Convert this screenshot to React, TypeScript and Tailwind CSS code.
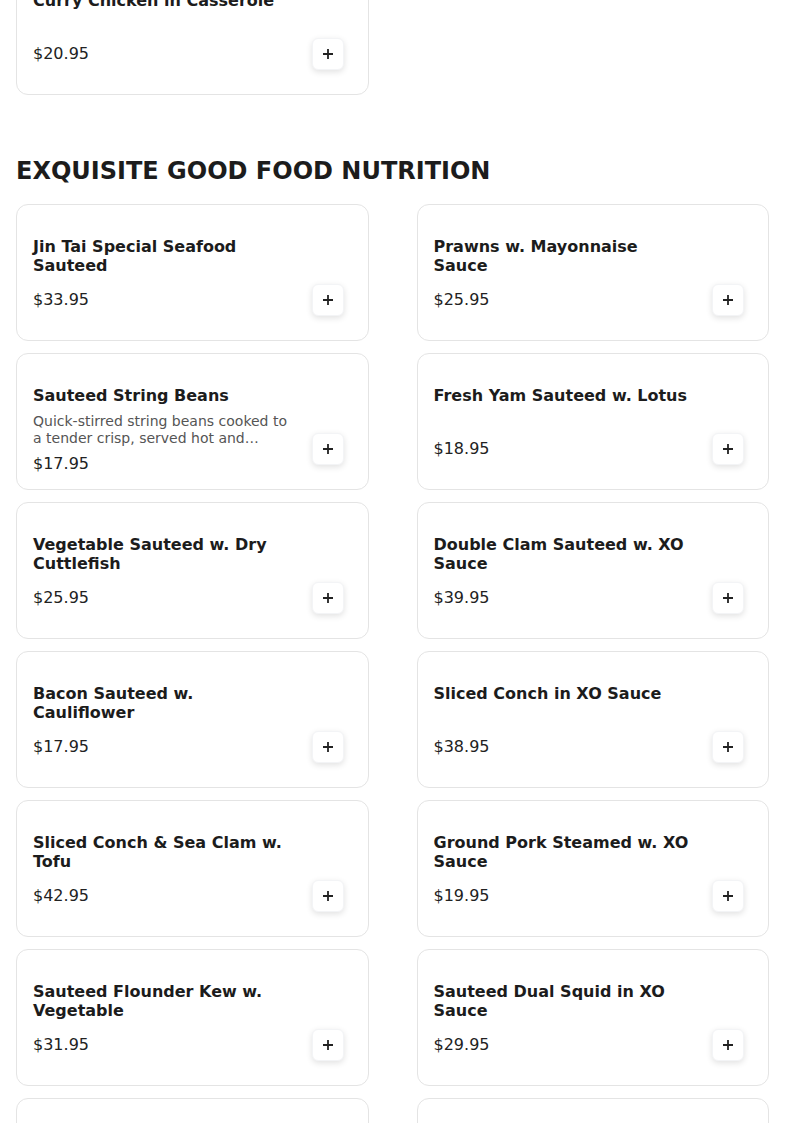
import React from 'react';

type Dish = {
  name: string;
  price: string;
  desc?: string;
};

const dishes: Dish[] = [
  { name: 'Jin Tai Special Seafood Sauteed', price: '$33.95' },
  { name: 'Prawns w. Mayonnaise Sauce', price: '$25.95' },
  {
    name: 'Sauteed String Beans',
    price: '$17.95',
    desc: 'Quick-stirred string beans cooked to a tender crisp, served hot and fragrant with garlic.',
  },
  { name: 'Fresh Yam Sauteed w. Lotus', price: '$18.95' },
  { name: 'Vegetable Sauteed w. Dry Cuttlefish', price: '$25.95' },
  { name: 'Double Clam Sauteed w. XO Sauce', price: '$39.95' },
  { name: 'Bacon Sauteed w. Cauliflower', price: '$17.95' },
  { name: 'Sliced Conch in XO Sauce', price: '$38.95' },
  { name: 'Sliced Conch & Sea Clam w. Tofu', price: '$42.95' },
  { name: 'Ground Pork Steamed w. XO Sauce', price: '$19.95' },
  { name: 'Sauteed Flounder Kew w. Vegetable', price: '$31.95' },
  { name: 'Sauteed Dual Squid in XO Sauce', price: '$29.95' },
  { name: 'Shredded Pork w. Garlic Sauce', price: '$18.95' },
  { name: 'Beef w. Black Pepper Sauce', price: '$24.95' },
];

function AddButton() {
  return (
    <button className="w-8 h-8 shrink-0 self-end rounded-md bg-white border border-gray-100 shadow-[0_2px_6px_rgba(0,0,0,0.12)] flex items-center justify-center">
      <svg width="10" height="10" viewBox="0 0 10 10" className="text-[#222]">
        <path d="M5 0v10M0 5h10" stroke="currentColor" strokeWidth="1.8" />
      </svg>
    </button>
  );
}

function DishCard({ dish }: { dish: Dish }) {
  return (
    <div className="h-[137px] bg-white border border-[#e4e4e4] rounded-xl flex gap-4 pl-4 pr-6 pt-8 pb-6">
      <div className="flex-1 min-w-0 flex flex-col">
        <div className="min-h-[51px] shrink-0">
          <h3 className="text-base leading-[19px] font-bold text-[#1c1c1c]">{dish.name}</h3>
          {dish.desc && (
            <p className="mt-2 mb-[5px] text-sm leading-[17px] text-[#555] line-clamp-2">{dish.desc}</p>
          )}
        </div>
        <div className="shrink-0 text-base leading-6 text-[#222]">{dish.price}</div>
      </div>
      <AddButton />
    </div>
  );
}

export default function App() {
  return (
    <div className="min-h-screen bg-white px-4 font-['DejaVu_Sans',sans-serif] overflow-hidden">
      {/* end of previous section */}
      <div className="grid grid-cols-2 gap-x-12 -mt-[42px]">
        <DishCard dish={{ name: 'Curry Chicken in Casserole', price: '$20.95' }} />
      </div>

      <section className="mt-[60px]">
        <h2 className="text-2xl leading-8 font-bold text-[#1c1c1c] mb-[17px]">
          EXQUISITE GOOD FOOD NUTRITION
        </h2>
        <div className="grid grid-cols-2 gap-x-12 gap-y-3">
          {dishes.map((d) => (
            <DishCard key={d.name} dish={d} />
          ))}
        </div>
      </section>
    </div>
  );
}
